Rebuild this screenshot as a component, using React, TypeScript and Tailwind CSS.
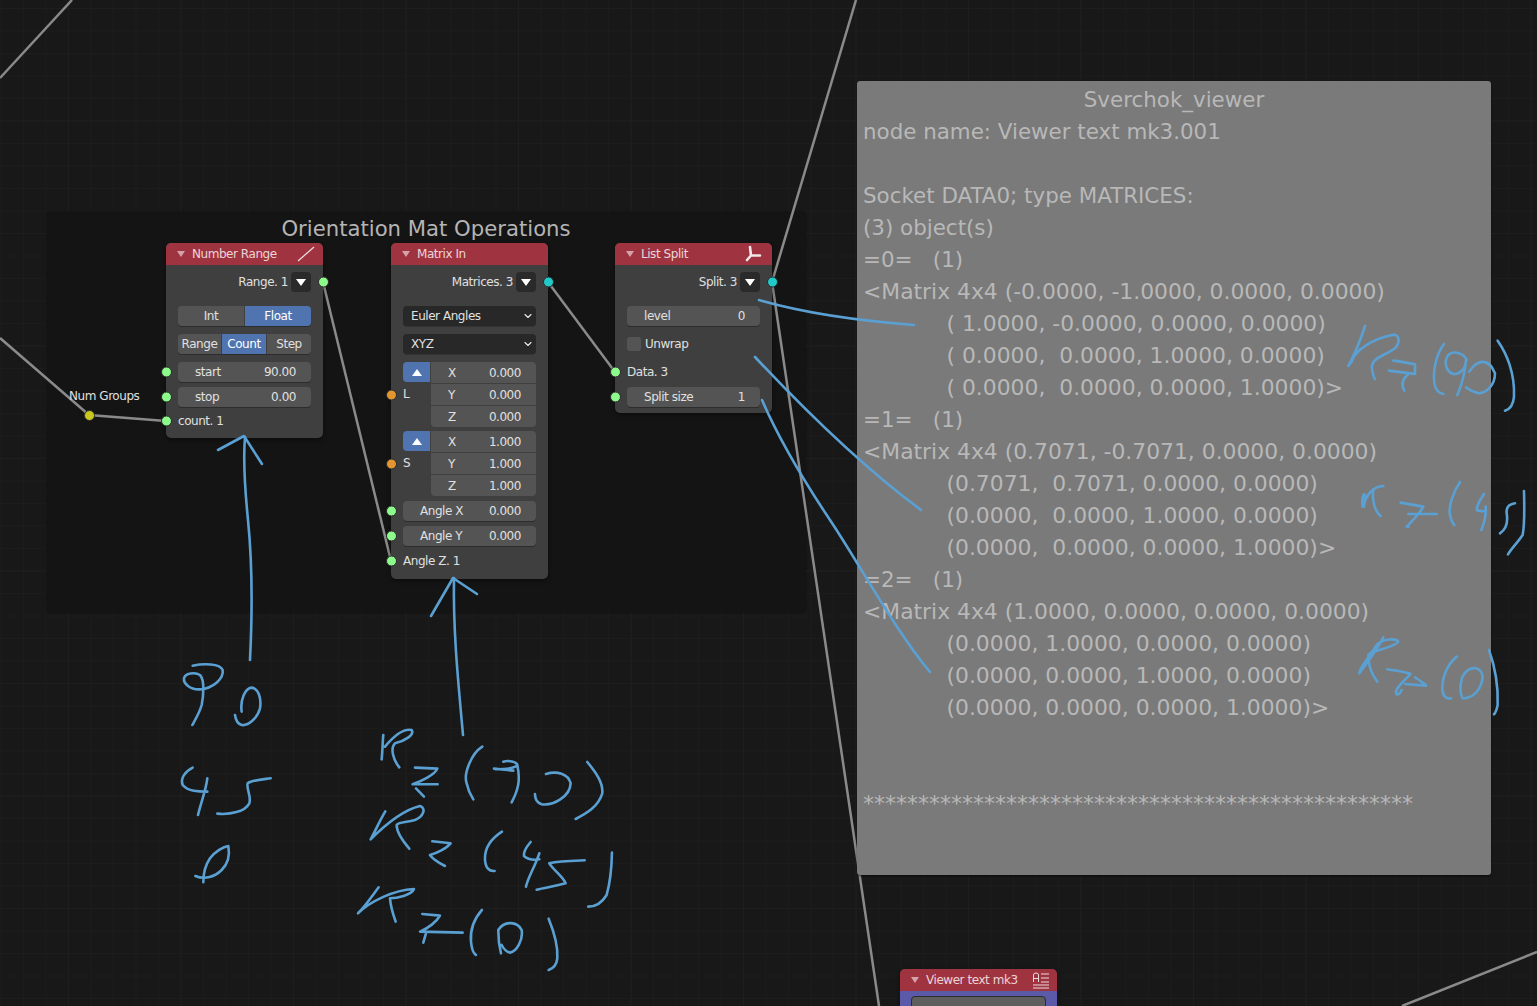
import type { ReactNode } from "react";
import { ChevronDown } from "lucide-react";

type SocketColor = "green" | "orange" | "cyan";

const socketClass: Record<SocketColor, string> = {
  green: "bg-[#8cfb8c]",
  orange: "bg-[#e3952f]",
  cyan: "bg-[#22c9c9]",
};

function Socket({ color, side = "left" }: { color: SocketColor; side?: "left" | "right" }) {
  return (
    <span
      className={`absolute top-1/2 size-[11px] -translate-y-1/2 rounded-full border border-[#2a2a2a] ${socketClass[color]} ${
        side === "left" ? "left-[-5.5px]" : "right-[-5.5px]"
      }`}
    />
  );
}

function Row({
  socket,
  side,
  className = "",
  children,
}: {
  socket?: SocketColor;
  side?: "left" | "right";
  className?: string;
  children: ReactNode;
}) {
  return (
    <div className={`relative px-3 ${className}`}>
      {socket && <Socket color={socket} side={side} />}
      {children}
    </div>
  );
}

function Field({ label, value }: { label: string; value: string }) {
  return (
    <div className="flex h-5 items-center justify-between rounded-[4px] bg-[#545454] pl-[17px] pr-[15px] shadow-[0_1px_0_#2c2c2c]">
      <span>{label}</span>
      <span>{value}</span>
    </div>
  );
}

function Segments({ items, active }: { items: [string, number][]; active: string }) {
  return (
    <div className="flex h-5 gap-px overflow-hidden rounded-[4px] shadow-[0_1px_0_#2c2c2c]">
      {items.map(([name, width]) => (
        <div
          key={name}
          style={{ flexGrow: width, flexBasis: 0 }}
          className={`flex items-center justify-center ${name === active ? "bg-[#4f74b0] text-white" : "bg-[#545454]"}`}
        >
          {name}
        </div>
      ))}
    </div>
  );
}

function OutputRow({ label, socket }: { label: string; socket: SocketColor }) {
  return (
    <Row socket={socket} side="right" className="flex h-5 items-center justify-end gap-[3px]">
      <span>{label}</span>
      <span className="flex size-5 items-center justify-center rounded-[4px] bg-[#2a2a2a]">
        <span className="h-0 w-0 border-x-[5px] border-t-[7px] border-x-transparent border-t-white" />
      </span>
    </Row>
  );
}

function Dropdown({ label }: { label: string }) {
  return (
    <div className="flex h-5 items-center justify-between rounded-[4px] bg-[#282828] pl-2 pr-[2px] shadow-[0_1px_0_#333]">
      <span>{label}</span>
      <ChevronDown size={12} strokeWidth={2.2} color="#ececec" />
    </div>
  );
}

function VectorGroup({ label, values }: { label: string; values: string[] }) {
  const axes = ["X", "Y", "Z"];
  return (
    <Row socket="orange" className="flex">
      <div className="flex w-[28px] flex-col">
        <span className="flex h-[20px] w-[27px] items-center justify-center rounded-l-[4px] bg-[#4f74b0]">
          <span className="h-0 w-0 border-x-[5px] border-b-[7px] border-x-transparent border-b-white" />
        </span>
        <span className="mt-[4px] leading-4">{label}</span>
      </div>
      <div className="flex flex-1 flex-col gap-px overflow-hidden rounded-r-[4px] rounded-bl-[4px]">
        {values.map((v, i) => (
          <div key={axes[i]} className="flex h-[21px] items-center justify-between bg-[#545454] pl-[17px] pr-[15px]">
            <span>{axes[i]}</span>
            <span>{v}</span>
          </div>
        ))}
      </div>
    </Row>
  );
}

function Node({
  title,
  left,
  top,
  icon,
  children,
}: {
  title: string;
  left: string;
  top: string;
  icon?: ReactNode;
  children: ReactNode;
}) {
  return (
    <div className={`absolute w-[157px] rounded-[5px] bg-[#3f3f3f] text-[12px] leading-4 tracking-[-0.45px] text-[#e0e0e0] shadow-[0_2px_4px_rgba(0,0,0,0.4)] ${left} ${top}`}>
      <div className="flex h-[22px] items-center justify-between rounded-t-[5px] bg-[#9f3340] pl-[11px] pr-2">
        <div className="flex items-center gap-[7px]">
          <span className="h-0 w-0 border-x-[4px] border-t-[6px] border-x-transparent border-t-[#d4a3a9]" />
          <span className="text-[#ecd5d8]">{title}</span>
        </div>
        {icon}
      </div>
      {children}
    </div>
  );
}

const wires = [
  "M0 78 L72 0",
  "M0 338 L89 415 L166 421",
  "M323 282 L391 561",
  "M548 282 L615 372",
  "M772 282 L856 0",
  "M772 282 L879 1006",
  "M1537 952 L1402 1006",
];

// strokes below are in the coordinates of the page
const inkPage = [
  "M250 660 C253 600 252 560 248 520 C245 490 243 460 245 437",
  "M218 450 L244 436 L262 464",
  "M431 616 L453 578 L477 594",
  "M463 735 C458 680 453 630 454 578",
  "M759 300 C800 312 850 320 914 325",
  "M755 357 C800 405 860 465 921 510",
  "M762 400 C775 430 800 475 830 520 C860 565 895 630 930 672",
];

// handwriting under the nodes, traced at 3x from (170, 650)
const inkLeft = [
  "M68 47 C100 40 150 40 158 60 C162 85 130 115 90 118 C60 120 40 100 42 85 C45 70 75 65 90 75 C105 90 100 140 95 165 C88 190 75 210 67 225",
  "M215 185 C210 150 225 115 245 113 C265 115 275 145 270 175 C262 205 235 228 215 225 C205 222 197 210 195 195",
  "M68 353 C45 365 30 385 38 405 C55 425 85 425 112 425 M112 385 C108 420 95 450 84 495",
  "M302 385 C280 388 245 390 233 400 C228 415 245 440 238 460 C225 485 180 495 142 491",
  "M100 697 C100 670 103 650 120 625 C135 605 160 590 175 588 C180 615 175 640 155 660 C135 680 105 690 76 678",
  "M635 328 C638 300 638 270 640 255 M645 290 C670 260 700 235 725 240 C735 255 700 275 675 280 C660 295 670 330 688 352",
  "M735 353 L802 356 C795 375 750 395 728 403 L803 403 M738 415 L762 440",
  "M937 290 C905 310 880 370 890 400 C895 425 905 440 910 448",
  "M972 356 L1030 362 M1000 335 C1015 330 1040 335 1042 345 C1035 355 1000 358 975 358 M1042 345 C1052 390 1045 420 1025 457",
  "M1128 372 C1160 362 1195 370 1202 400 C1200 440 1150 468 1115 463 C1100 458 1095 445 1095 432",
  "M1252 336 C1280 370 1300 400 1297 430 C1285 470 1250 490 1217 507",
  "M646 484 C630 510 615 545 602 568 C640 530 700 480 750 468 C770 475 760 500 735 510 C710 518 685 515 680 525 C680 545 700 575 718 596",
  "M787 574 L842 580 C830 595 800 610 780 615 C790 630 810 640 825 648",
  "M996 545 C965 565 945 590 945 625 C945 650 955 665 974 663",
  "M1082 576 C1070 590 1060 605 1062 618 C1075 630 1095 630 1108 628 M1108 610 C1095 650 1075 680 1068 710",
  "M1244 631 C1210 632 1170 632 1138 640 C1150 660 1180 680 1187 700 C1160 708 1130 712 1100 719",
  "M1326 608 C1325 660 1320 700 1310 735 C1295 760 1275 770 1255 770",
  "M626 712 C605 740 585 770 564 790 C600 755 670 720 732 717 C725 735 680 745 660 745 C662 770 670 795 677 815",
  "M757 792 L810 797 C800 815 775 835 750 845 L878 848 M768 850 L760 878",
  "M936 780 C910 810 900 840 903 875 C905 895 908 910 918 915",
  "M985 842 C985 870 988 890 993 910 M985 840 C1000 815 1040 810 1055 840 C1060 870 1040 905 1020 908 C1010 905 1000 895 995 885",
  "M1136 806 C1150 840 1165 880 1162 925 C1160 945 1150 955 1136 960",
];

// handwriting over the viewer, traced at 3x from (1340, 310)
const inkRight = [
  "M75 48 C60 95 40 140 25 168 L35 155 C45 120 100 85 160 74 C180 75 180 100 165 115 C140 135 100 140 95 170 C97 185 100 200 105 207",
  "M160 152 C185 155 210 160 225 163 L225 192 M147 182 C170 185 205 190 225 192 M205 192 C190 205 180 220 193 242",
  "M312 102 C290 130 278 180 283 220 C287 240 295 250 310 252",
  "M380 150 C370 130 340 120 325 135 C310 155 318 185 340 192 C360 195 378 175 378 150 C375 190 365 225 352 255",
  "M388 185 C410 150 445 140 465 190 C465 225 440 250 415 250 C400 245 385 238 378 232",
  "M473 92 C500 130 525 190 522 260 C520 285 510 298 495 302",
  "M68 590 C65 570 70 545 75 555 L72 590 M70 590 C80 550 100 530 130 528 M100 540 C95 570 105 605 122 618",
  "M182 578 L250 590 C240 610 220 630 200 650 M205 612 L290 612 M205 650 L206 650",
  "M360 516 C340 545 325 590 330 615 C333 630 338 640 343 645",
  "M432 552 C420 570 410 590 410 600 C420 605 430 603 437 603 M437 590 C440 620 430 645 424 660",
  "M525 580 C510 582 498 590 500 610 C505 640 495 660 480 670",
  "M552 543 C553 580 555 640 548 675 C535 695 515 715 504 733",
  "M130 982 C105 1030 75 1065 58 1090 C60 1075 85 1040 100 1025 C130 1015 165 1010 175 995 C170 985 130 985 110 1005 C95 1030 85 1035 85 1035 C85 1070 100 1100 112 1115",
  "M142 1078 C170 1082 195 1085 212 1092 M225 1102 L258 1125 M195 1122 L258 1127 M212 1092 C190 1115 165 1135 168 1150 C172 1158 182 1150 185 1140",
  "M350 1040 C325 1060 305 1100 307 1140 C310 1160 320 1168 333 1165",
  "M365 1110 C358 1130 362 1155 368 1165 M365 1105 C380 1070 420 1060 428 1100 C425 1135 405 1160 375 1165",
  "M447 1020 C465 1070 475 1130 473 1185 C470 1200 465 1210 462 1213",
];

type Line = { text: string; indent?: boolean; kind?: "num" | "stars" };

const viewerLines: Line[] = [
  { text: "node name: Viewer text mk3.001" },
  { text: " " },
  { text: "Socket DATA0; type MATRICES:" },
  { text: "(3) object(s)" },
  { text: "=0=   (1)" },
  { text: "<Matrix 4x4 (-0.0000, -1.0000, 0.0000, 0.0000)", kind: "num" },
  { text: "( 1.0000, -0.0000, 0.0000, 0.0000)", indent: true, kind: "num" },
  { text: "( 0.0000,  0.0000, 1.0000, 0.0000)", indent: true, kind: "num" },
  { text: "( 0.0000,  0.0000, 0.0000, 1.0000)>", indent: true, kind: "num" },
  { text: "=1=   (1)" },
  { text: "<Matrix 4x4 (0.7071, -0.7071, 0.0000, 0.0000)", kind: "num" },
  { text: "(0.7071,  0.7071, 0.0000, 0.0000)", indent: true, kind: "num" },
  { text: "(0.0000,  0.0000, 1.0000, 0.0000)", indent: true, kind: "num" },
  { text: "(0.0000,  0.0000, 0.0000, 1.0000)>", indent: true, kind: "num" },
  { text: "=2=   (1)" },
  { text: "<Matrix 4x4 (1.0000, 0.0000, 0.0000, 0.0000)", kind: "num" },
  { text: "(0.0000, 1.0000, 0.0000, 0.0000)", indent: true, kind: "num" },
  { text: "(0.0000, 0.0000, 1.0000, 0.0000)", indent: true, kind: "num" },
  { text: "(0.0000, 0.0000, 0.0000, 1.0000)>", indent: true, kind: "num" },
  { text: " " },
  { text: " " },
  { text: "*".repeat(50), kind: "stars" },
];

function lineClass(line: Line) {
  const size = line.kind === "num" ? "text-[21.85px]" : line.kind === "stars" ? "text-[22px]" : "text-[21.4px]";
  return `${size} ${line.indent ? "pl-[83.5px]" : ""}`;
}

export default function App() {
  return (
    <div className="relative h-[1006px] w-[1537px] overflow-hidden bg-[#181818] bg-[linear-gradient(to_right,#1e1e1e_1px,transparent_1px),linear-gradient(to_bottom,#1e1e1e_1px,transparent_1px),linear-gradient(to_right,#1c1c1c_1px,transparent_1px),linear-gradient(to_bottom,#1c1c1c_1px,transparent_1px)] bg-[size:112.5px_112.5px,112.5px_112.5px,22.5px_22.5px,22.5px_22.5px] bg-[position:68px_8px,68px_8px,0.5px_8px,0.5px_8px] font-['DejaVu_Sans',sans-serif]">
      {/* frame */}
      <div className="absolute left-[47px] top-[212px] h-[400px] w-[758px] rounded-[4px] bg-[#141414] text-center shadow-[0_0_3px_rgba(0,0,0,0.5)]">
        <div className="mt-[3px] text-[21.2px] leading-7 text-[#b4b4b4]">Orientation Mat Operations</div>
      </div>

      {/* wires */}
      <svg className="absolute left-0 top-0" width="1537" height="1006" fill="none" stroke="#8a8a8a" strokeWidth="2.5">
        {wires.map((d) => (
          <path key={d} d={d} />
        ))}
      </svg>

      {/* reroute */}
      <span className="absolute left-[69px] top-[388px] text-[12px] leading-4 tracking-[-0.45px] text-[#e0e0e0]">Num Groups</span>
      <span className="absolute left-[83.5px] top-[409.5px] size-[11px] rounded-full border border-[#2a2a2a] bg-[#c8c81e]" />

      <Node
        title="Number Range"
        left="left-[166px]"
        top="top-[243px]"
        icon={
          <svg width="18" height="16" viewBox="0 0 18 16" fill="none" stroke="#e8dcdc" strokeWidth="1.3">
            <path d="M1 15 L17 1" />
          </svg>
        }
      >
        <div className="flex flex-col pb-[7px] pt-[7px]">
          <OutputRow label="Range. 1" socket="green" />
          <Row className="mt-[14px]">
            <Segments items={[["Int", 1], ["Float", 1]]} active="Float" />
          </Row>
          <Row className="mt-2">
            <Segments items={[["Range", 43], ["Count", 44], ["Step", 44]]} active="Count" />
          </Row>
          <Row socket="green" className="mt-2">
            <Field label="start" value="90.00" />
          </Row>
          <Row socket="green" className="mt-[5px]">
            <Field label="stop" value="0.00" />
          </Row>
          <Row socket="green" className="mt-1 flex h-5 items-center">
            count. 1
          </Row>
        </div>
      </Node>

      <Node title="Matrix In" left="left-[391px]" top="top-[243px]">
        <div className="flex flex-col pb-2 pt-[7px]">
          <OutputRow label="Matrices. 3" socket="cyan" />
          <Row className="mt-[14px]">
            <Dropdown label="Euler Angles" />
          </Row>
          <Row className="mt-2">
            <Dropdown label="XYZ" />
          </Row>
          <div className="mt-2">
            <VectorGroup label="L" values={["0.000", "0.000", "0.000"]} />
          </div>
          <div className="mt-1">
            <VectorGroup label="S" values={["1.000", "1.000", "1.000"]} />
          </div>
          <Row socket="green" className="mt-[5px]">
            <Field label="Angle X" value="0.000" />
          </Row>
          <Row socket="green" className="mt-[5px]">
            <Field label="Angle Y" value="0.000" />
          </Row>
          <Row socket="green" className="mt-[5px] flex h-5 items-center">
            Angle Z. 1
          </Row>
        </div>
      </Node>

      <Node
        title="List Split"
        left="left-[615px]"
        top="top-[243px]"
        icon={
          <svg width="18" height="18" viewBox="0 0 18 18" fill="none" stroke="#f0e8e8" strokeWidth="2.6" strokeLinecap="round" className="mr-[1px]">
            <path d="M5 2 L6 10.5 L15 10.5 M6 10.5 L2 15" />
          </svg>
        }
      >
        <div className="flex flex-col pb-[6px] pt-[7px]">
          <OutputRow label="Split. 3" socket="cyan" />
          <Row className="mt-[14px]">
            <Field label="level" value="0" />
          </Row>
          <Row className="mt-2 flex h-5 items-center gap-1">
            <span className="size-[14px] rounded-[3px] bg-[#545454]" />
            Unwrap
          </Row>
          <Row socket="green" className="mt-2 flex h-5 items-center">
            Data. 3
          </Row>
          <Row socket="green" className="mt-[5px]">
            <Field label="Split size" value="1" />
          </Row>
        </div>
      </Node>

      <Node
        title="Viewer text mk3"
        left="left-[900px]"
        top="top-[969px]"
        icon={
          <svg width="18" height="17" viewBox="0 0 18 17" fill="none" stroke="#ecdcdc" strokeWidth="1" className="mr-[-1px]">
            <path d="M1.5 10 V3 Q1.5 1 4 1 Q6.5 1 6.5 3 V10 M1.5 6.5 H6.5 M9 2 H17 M9 6 H17 M9 10 H17 M1 13 H17 M1 16 H17" />
          </svg>
        }
      >
        <div className="h-[60px] bg-[#5a5aa8] px-[11px] pt-[5px]">
          <div className="h-10 rounded-[4px] border border-[#2c2c2c] bg-[#5e5e5e]" />
        </div>
      </Node>

      {/* viewer panel */}
      <div className="absolute left-[857px] top-[81px] h-[794px] w-[634px] whitespace-pre rounded-[3px] bg-[#7a7a7a] px-[6px] pt-[3px] leading-8 text-[#b8b8b8] shadow-[0_1px_2px_rgba(0,0,0,0.6)]">
        <div className="text-center text-[21.4px]">Sverchok_viewer</div>
        {viewerLines.map((line, i) => (
          <div key={i} className={lineClass(line)}>
            {line.text}
          </div>
        ))}
      </div>

      {/* handwriting */}
      <svg className="absolute left-0 top-0" width="1537" height="1006" fill="none" stroke="#5ba0d2" strokeWidth="2.6" strokeLinecap="round" strokeLinejoin="round">
        {inkPage.map((d) => (
          <path key={d} d={d} />
        ))}
        <g transform="translate(170 650) scale(0.3333)" strokeWidth="7.8">
          {inkLeft.map((d) => (
            <path key={d} d={d} />
          ))}
        </g>
        <g transform="translate(1340 310) scale(0.3333)" strokeWidth="7.8">
          {inkRight.map((d) => (
            <path key={d} d={d} />
          ))}
        </g>
      </svg>
    </div>
  );
}
